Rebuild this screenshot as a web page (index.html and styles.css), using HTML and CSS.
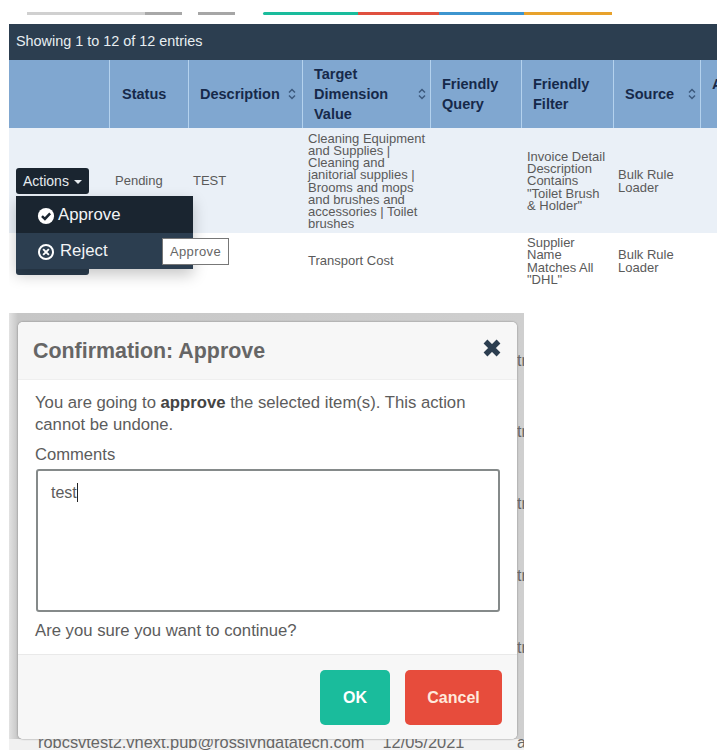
FILE: index.html
```html
<!DOCTYPE html>
<html lang="en">
<head>
<meta charset="utf-8">
<title>Confirmation: Approve</title>
<link rel="stylesheet" href="styles.css">
</head>
<body>
<div class="bars">
  <div class="bar-gray"></div>
  <div class="bar-short"></div>
  <div class="bar-colors">
    <span class="seg seg-green"></span><span class="seg seg-red"></span><span class="seg seg-blue"></span><span class="seg seg-orange"></span>
  </div>
</div>
<section class="panel">
  <div class="panel-head">Showing 1 to 12 of 12 entries</div>
  <table class="grid">
    <colgroup>
      <col class="c1"><col class="c2"><col class="c3"><col class="c4"><col class="c5"><col class="c6"><col class="c7"><col class="c8">
    </colgroup>
    <thead>
      <tr>
        <th></th>
        <th>Status</th>
        <th><div class="sortable">Description<svg class="sort sort-near" viewBox="0 0 8 12"><path d="M1 4.5 4 1.5 7 4.5M1 7.5 4 10.5 7 7.5"/></svg></div></th>
        <th><div class="sortable">Target<br>Dimension<br>Value<svg class="sort" viewBox="0 0 8 12"><path d="M1 4.5 4 1.5 7 4.5M1 7.5 4 10.5 7 7.5"/></svg></div></th>
        <th>Friendly<br>Query</th>
        <th>Friendly<br>Filter</th>
        <th><div class="sortable">Source<svg class="sort" viewBox="0 0 8 12"><path d="M1 4.5 4 1.5 7 4.5M1 7.5 4 10.5 7 7.5"/></svg></div></th>
        <th>A<br>&nbsp;</th>
      </tr>
    </thead>
    <tbody>
      <tr class="row-a">
        <td class="cell-actions">
          <button class="actions actions-open">Actions<i class="caret"></i></button>
          <div class="menu">
            <div class="menu-item menu-approve">
              <svg class="menu-icon" viewBox="0 0 20 20"><circle cx="10" cy="10" r="9" fill="#fff"/><path d="M5.5 10.2 8.8 13.3 14.6 7.2" fill="none" stroke="#1a2530" stroke-width="2.8"/></svg>Approve
            </div>
            <div class="menu-item menu-reject">
              <svg class="menu-icon" viewBox="0 0 20 20"><circle cx="10" cy="10" r="7.8" fill="none" stroke="#fff" stroke-width="2.2"/><path d="M6.8 6.8 13.2 13.2M13.2 6.8 6.8 13.2" fill="none" stroke="#fff" stroke-width="2.2"/></svg>Reject
            </div>
            <div class="tip">Approve</div>
          </div>
        </td>
        <td>Pending</td>
        <td>TEST</td>
        <td>Cleaning Equipment and Supplies | Cleaning and janitorial supplies | Brooms and mops and brushes and accessories | Toilet brushes</td>
        <td></td>
        <td>Invoice Detail Description Contains "Toilet Brush &amp; Holder"</td>
        <td>Bulk Rule Loader</td>
        <td></td>
      </tr>
      <tr class="row-b">
        <td class="cell-actions"><button class="actions">Actions<i class="caret"></i></button></td>
        <td></td>
        <td></td>
        <td>Transport Cost</td>
        <td></td>
        <td>Supplier Name Matches All "DHL"</td>
        <td>Bulk Rule Loader</td>
        <td></td>
      </tr>
    </tbody>
  </table>
</section>
<section class="backdrop">
  <span class="behind b1">tr</span>
  <span class="behind b2">tr</span>
  <span class="behind b3">tr</span>
  <span class="behind b4">tr</span>
  <span class="behind b5">tr</span>
  <span class="behind b6">a</span>
  <div class="dialog">
    <header class="dialog-head">
      <h2>Confirmation: Approve</h2>
      <svg class="close" viewBox="0 0 20 20"><path d="M3.5 3.5 16.5 16.5M16.5 3.5 3.5 16.5" fill="none" stroke="#2c3e50" stroke-width="5.4"/></svg>
    </header>
    <div class="dialog-body">
      <p class="msg">You are going to <b>approve</b> the selected item(s). This action cannot be undone.</p>
      <div class="label">Comments</div>
      <div class="textarea">test<i class="text-caret"></i></div>
      <p class="sure">Are you sure you want to continue?</p>
    </div>
    <footer class="dialog-foot">
      <button class="btn btn-ok">OK</button>
      <button class="btn btn-cancel">Cancel</button>
    </footer>
  </div>
  <div class="under"><span>robcsvtest2.vnext.pub@rossivndatatech.com</span><span>12/05/2021</span></div>
</section>
</body>
</html>
```
FILE: styles.css
```css
* { box-sizing: border-box; }
html, body { margin: 0; padding: 0; background: #fff; }
body {
  width: 724px;
  height: 756px;
  overflow: hidden;
  font-family: "Liberation Sans", Arial, sans-serif;
  color: #555;
}
.bars { display: flex; height: 24px; padding: 12px 0 0 27px; }
.bar-gray {
  width: 155px; height: 3px;
  background: linear-gradient(90deg, #d0d0d0 0 76%, #a8a8a8 76%);
}
.bar-short { width: 37px; height: 3px; margin-left: 16px; background: #a6a6a6; }
.bar-colors { display: flex; height: 3px; margin-left: 28px; }
.seg { display: block; height: 3px; }
.seg-green { width: 95px; background: #1abc9c; border-radius: 2px 0 0 2px; }
.seg-red { width: 81px; background: #e0503f; }
.seg-blue { width: 85px; background: #3d95cf; }
.seg-orange { width: 88px; background: #e8a22c; }

.panel { width: 708px; height: 266px; margin-left: 9px; overflow: hidden; }
.panel-head {
  height: 36px;
  padding-left: 7px;
  background: #2c3e50;
  color: #e8eef2;
  font-size: 14.4px;
  line-height: 34px;
}
.grid { width: 738px; table-layout: fixed; border-collapse: separate; border-spacing: 0; }
.c1 { width: 100px; } .c2 { width: 79px; } .c3 { width: 114px; } .c4 { width: 128px; }
.c5 { width: 91px; } .c6 { width: 92px; } .c7 { width: 87px; } .c8 { width: 47px; }
.grid th {
  height: 68px;
  padding: 0 0 0 11px;
  background: #80a7d0;
  border-left: 1px solid #b4d2ee;
  color: #16294a;
  font-size: 14.5px;
  line-height: 20px;
  font-weight: 700;
  text-align: left;
  vertical-align: middle;
}
.grid th:first-child { border-left: 0; }
.grid th:nth-child(2) { padding-left: 12px; }
.sortable { position: relative; }
.sort {
  position: absolute; right: 4px; top: 50%;
  width: 8px; height: 12px; margin-top: -6px;
  fill: none; stroke: #3c5a7e; stroke-width: 1.5;
}
.sort-near { right: 6px; }
.grid td {
  padding: 0 4px 0 6px;
  font-size: 13px;
  line-height: 12.2px;
  color: #5a5a5a;
  vertical-align: middle;
}
.grid td:nth-child(3), .grid td:nth-child(7) { padding-left: 5px; }
.row-a td { height: 105px; padding-top: 2px; background: #eaf0f7; }
.row-b td { height: 57px; background: #fff; }
.grid .cell-actions { padding: 0 0 0 7px; position: relative; }
.actions {
  display: block;
  width: 73px; height: 26px;
  padding: 0 0 0 7px;
  border: 0; border-radius: 3px;
  background: #2c3e50;
  color: #e6ebef;
  font: 14px/26px "Liberation Sans", Arial, sans-serif;
  text-align: left;
}
.actions-open { background: #1a2530; }
.caret {
  display: inline-block; margin-left: 5px; vertical-align: 2px;
  border-top: 4px solid #e6ebef; border-left: 4px solid transparent; border-right: 4px solid transparent;
}
.menu {
  position: absolute; left: 7px; top: 68px; z-index: 2;
  width: 177px;
  box-shadow: 0 6px 14px rgba(0,0,0,.22);
}
.menu-item {
  display: flex; align-items: center; gap: 3px;
  height: 36px; padding-left: 21px;
  color: #f2f4f6; font-size: 16.8px;
}
.menu-approve { height: 37px; padding-top: 2px; background: #1a2530; }
.menu-reject { padding-top: 1px; background: #2c3e50; gap: 5px; }
.menu-icon { width: 18px; height: 18px; flex: none; }
.tip {
  position: absolute; left: 146px; top: 42px;
  width: 67px; height: 27px;
  border: 1px solid #777;
  background: #fff; color: #666;
  font-size: 13px; line-height: 25px; letter-spacing: .4px; text-align: center;
}

.backdrop {
  position: relative;
  width: 515px; height: 437px;
  margin: 23px 0 0 9px;
  padding: 9px 7px 0 9px;
  background: linear-gradient(90deg, #e2e2e2, #c6c6c6 9px, #cfcfcf 100%);
}
.behind {
  position: absolute; left: 508px; width: 7px; overflow: hidden;
  font-size: 16px; line-height: 18px; color: #666;
}
.b1 { top: 39px; } .b2 { top: 110px; } .b3 { top: 182px; } .b4 { top: 254px; } .b5 { top: 326px; }
.b6 { top: 423px; height: 14px; line-height: 14px; z-index: 1; }
.dialog {
  position: relative;
  z-index: 2;
  height: 417px;
  display: flex; flex-direction: column;
  border-radius: 5px;
  overflow: hidden;
  background: #fff;
  box-shadow: 0 0 2px #777;
}
.dialog-head {
  display: flex; align-items: center; justify-content: space-between;
  height: 58px; padding: 0 15px 0 15px;
  background: #f7f7f7;
  border-bottom: 1px solid #efefef;
}
.dialog-head h2 { margin: 1px 0 0; color: #666; font-size: 21.4px; font-weight: 700; }
.close { width: 20px; height: 20px; margin-bottom: 5px; }
.dialog-body { flex: 1; padding: 0 17px; background: #fff; }
.msg {
  margin: 12px 0 0; width: 450px;
  font-size: 16.7px; line-height: 22px; color: #5c5c5c;
}
.msg b { color: #444; }
.label { margin-top: 9px; font-size: 16.6px; line-height: 20px; color: #5c5c5c; }
.textarea {
  height: 143px; margin: 4px 0 0 1px; width: 464px;
  padding: 12px 13px;
  border: 2px solid #858a8a; border-radius: 3px;
  font-size: 16px; line-height: 20px; color: #5c5c5c;
}
.text-caret { display: inline-block; width: 1px; height: 19px; background: #222; vertical-align: -4px; }
.sure { margin: 9px 0 0; font-size: 16.7px; line-height: 20px; color: #5c5c5c; }
.dialog-foot {
  display: flex; justify-content: flex-end; gap: 15px;
  height: 85px; padding: 15px 15px 0 0;
  background: #f7f7f7;
  border-top: 1px solid #e9e9e9;
}
.btn {
  height: 55px; border: 0; border-radius: 5px;
  color: #fff; font: 700 16px "Liberation Sans", Arial, sans-serif;
}
.btn-ok { width: 70px; background: #1abc9c; }
.btn-cancel { width: 97px; background: #e74c3c; color: #ffe9dc; }
.under {
  display: flex; gap: 18px;
  height: 11px; overflow: hidden;
  margin: 0 -7px 0 -9px;
  padding-left: 29px;
  background: #f1f1f1;
  font-size: 16.4px; line-height: 7px; color: #666;
  white-space: nowrap;
}
```
